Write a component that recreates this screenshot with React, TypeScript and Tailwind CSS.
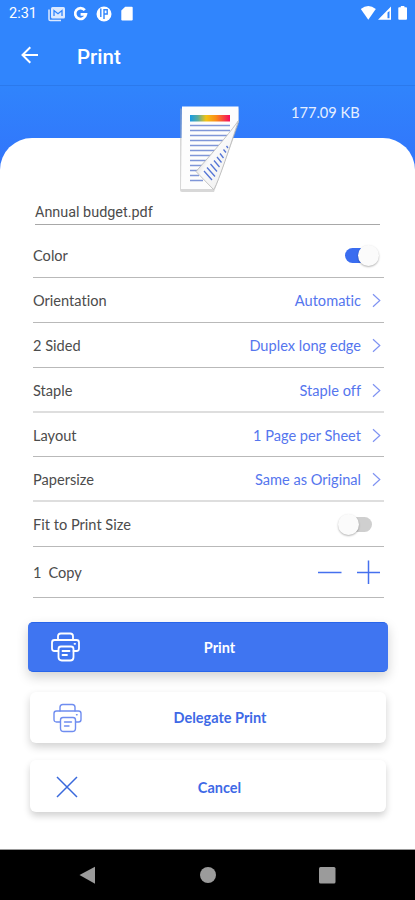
import clsx from "clsx";
import { useState } from "react";

const StatusBar = () => {
    return (
        <div className="flex h-7 items-start justify-between text-white">
            <div className="flex items-center pt-[5px] pl-[9px]">
                <span className="w-[39px] whitespace-nowrap font-[Roboto,sans-serif] text-[14.5px] leading-[18px]">2:31</span>
                <svg width="18" height="16" viewBox="0 0 18 16" fill="none">
                    <path d="M1 3.5v9.7q0 1.3 1.3 1.3H13" stroke="#dbe9ff" strokeWidth="1.5" />
                    <rect x="3" y="1" width="14" height="11.5" rx="1.5" fill="#dbe9ff" />
                    <path d="M6 10V4.5l4 3.2 4-3.2V10" stroke="#3085fd" strokeWidth="1.3" />
                </svg>
                <svg className="ml-[7px]" width="15" height="16" viewBox="0 0 15 16" fill="none" stroke="#fff" strokeWidth="2.7">
                    <path d="M11.8 4.2A5.4 5.4 0 1 0 12.9 8.4H7.6" />
                </svg>
                <svg className="ml-2" width="16" height="16" viewBox="0 0 16 16">
                    <circle cx="8" cy="8" r="7.5" fill="#fff" />
                    <path d="M4.8 2.5V11M8 3v10M8 3.8h3.2V8H8" stroke="#3085fd" strokeWidth="1.4" fill="none" />
                </svg>
                <svg className="ml-[9px]" width="12" height="16" viewBox="0 0 12 16" fill="#fff">
                    <path d="M4.2.8h6.5q1 0 1 1v11.4q0 1.3-1 1.3H1.3q-1 0-1-1.3V4.6z" />
                </svg>
            </div>
            <div className="flex pt-[5px] pr-[7px]">
                <svg width="48" height="16" viewBox="0 0 48 16" fill="#fff">
                    <path d="M.8 4Q8.3-2.2 15.8 4L8.3 14.7z" />
                    <path d="M18 14.8 31 1.5v13.3zM27.5 7.5v5.8h2V6z" fillRule="evenodd" />
                    <path d="M38.3 3q0-.8.8-.8h1.7V1h3.6v1.2h1.7q.9 0 .9.8v10.8q0 1-.9 1h-7q-.8 0-.8-1z" />
                </svg>
            </div>
        </div>
    );
};

const DocumentIcon = () => {
    return (
        <svg width="64" height="90" viewBox="0 0 64 90" className="block">
            <defs>
                <linearGradient id="rainbow">
                    <stop offset="0" stopColor="#159be6" />
                    <stop offset=".2" stopColor="#5aac9c" />
                    <stop offset=".4" stopColor="#f2c312" />
                    <stop offset=".65" stopColor="#fb8c18" />
                    <stop offset="1" stopColor="#f4095e" />
                </linearGradient>
                <linearGradient id="fold" x1="0" y1="0" x2="1" y2="1">
                    <stop offset=".3" stopColor="#d8d8d8" />
                    <stop offset=".45" stopColor="#fafafa" />
                    <stop offset=".8" stopColor="#f0f0f0" />
                </linearGradient>
            </defs>
            <path d="M2 3.5H61v15L36 87H4Q2 87 2 85z" fill="#a8a8a8" opacity=".45" />
            <path d="M4 1.5H60.500V17L35 84H3z" fill="#fdfdfd" />
            <rect x="12" y="10" width="40" height="6.5" fill="url(#rainbow)" />
            <path
                d="M12 20.5h40M12 25.500h40M12 30.500h38M12 35.500h34M12 40.500h30M12 45.500h26M12 50.500h22M12 55.500h18M12 60.500h14M12 65.500h8M12 70.500h9M12 75.500h13"
                stroke="#7f96d8"
                strokeWidth="1.3"
            />
            <path d="M60.500 15.500Q52 28 18 66.500L35.500 84.500Q39 82 60.500 15.500Z" fill="url(#fold)" stroke="#b5b5b5" strokeWidth=".8" />
            <path
                d="m26 66 8 9M29 62.500l8 9M32.500 59l6.500 7.500M36 55.500l5.500 6.500M39 52l4.500 5.500M42 48.500l3.500 4.500M45.500 44.500l2.500 3M48.500 41l1.500 2"
                stroke="#5575d6"
                strokeWidth="1.3"
            />
        </svg>
    );
};

const PrinterIcon = ({ className }: { className?: string }) => {
    return (
        <svg width="30" height="30" viewBox="0 0 30 30" fill="none" stroke="currentColor" strokeLinejoin="round" strokeLinecap="round" className={className}>
            <path d="M7 8V4.3Q7 1.5 9.8 1.5h9.4Q22 1.5 22 4.3V8" />
            <path d="M7.3 19H3.5Q1 19 1 16.5v-6Q1 8 3.5 8h22Q28 8 28 10.5v6q0 2.5-2.5 2.5h-3" />
            <path d="M10 14.5h10q2.5 0 2.5 2.5v8.2q0 3.3-3.3 3.3h-8.4q-3.3 0-3.3-3.3V17q0-2.5 2.5-2.5z" />
            <path d="M11.5 19h7M11.5 23H16M23.5 11.8h.6" />
        </svg>
    );
};

const Chevron = () => {
    return (
        <svg width="9" height="15" viewBox="0 0 9 15" fill="none" stroke="#7f93f2" strokeWidth="1.2">
            <path d="m1 1.2 6.8 6.3L1 13.8" />
        </svg>
    );
};

const Toggle = ({ on, onClick }: { on: boolean; onClick: () => void }) => {
    return (
        <button onClick={onClick} className={clsx("flex h-[21px] w-[34px] items-center", on ? "mr-px justify-end" : "mr-[8px] justify-start")}>
            <span className={clsx("flex h-[15px] w-[27px] items-center rounded-full", on ? "mr-[7px] justify-end bg-[#3a6df0]" : "ml-[7px] justify-start bg-[#cfcfcf]")}>
                <span className={clsx("size-[21px] shrink-0 rounded-full bg-[#fbfbfb] shadow-[0_1px_2px_rgba(0,0,0,0.3)]", on ? "-mr-[7px]" : "-ml-[7px]")}></span>
            </span>
        </button>
    );
};

const rows = [
    { label: "Orientation", value: "Automatic", className: "h-[45px] border-b border-[#b9b9b9]" },
    { label: "2 Sided", value: "Duplex long edge", className: "h-[45px] border-b border-[#b9b9b9]" },
    { label: "Staple", value: "Staple off", className: "h-[45px] border-b-2 border-[#dedede]" },
    { label: "Layout", value: "1 Page per Sheet", className: "h-[44px] border-b border-[#b9b9b9]" },
    { label: "Papersize", value: "Same as Original", className: "h-[45px] border-b-2 border-[#dedede]" },
];

const App = () => {
    const [color, setColor] = useState(true);
    const [fit, setFit] = useState(false);

    return (
        <div className="flex h-[900px] w-[415px] flex-col overflow-hidden bg-white font-[Lato,sans-serif] text-[14.6px] text-[#4c4c4c] [font-variant-ligatures:none]">
            <header className="h-[86px] shrink-0 border-b border-[#2b79ec] bg-[#3085fd] text-white">
                <StatusBar />
                <div className="flex h-[57px] items-center pl-[21px]">
                    <svg width="18" height="18" viewBox="0 0 18 18" fill="none" stroke="#fff" strokeWidth="2" className="mb-[3px]">
                        <path d="M9.3 1.2 1.5 9l7.8 7.8M1.5 9H17" />
                    </svg>
                    <h1 className="mt-px ml-[38px] font-[Roboto,sans-serif] text-[20.5px] font-medium">Print</h1>
                </div>
            </header>
            <div className="h-[90px] shrink-0 bg-linear-to-b from-[#3084fc] to-[#3273fb]">
                <div className="relative h-[52px] pt-4 pl-[291px] text-[14.6px] leading-[21px] text-[#e6efff]">
                    177.09 KB
                    <div className="absolute top-[19px] left-[178px]">
                        <DocumentIcon />
                    </div>
                </div>
                <div className="h-[38px] rounded-t-[32px] bg-white"></div>
            </div>
            <main className="grow">
                <div className="mr-[35px] ml-[35px] flex h-[49px] items-end border-b border-[#a8a8a8] pb-px font-[Roboto,sans-serif] text-[14.4px] leading-[20px]">
                    Annual budget.pdf
                </div>
                <div className="mr-[31px] ml-[33px]">
                    <div className="flex h-[53px] items-center justify-between border-b border-[#b9b9b9] pt-[9px] pr-[4px]">
                        Color
                        <Toggle on={color} onClick={() => setColor(!color)} />
                    </div>
                    {rows.map((row) => (
                        <div key={row.label} className={clsx("flex items-center justify-between pt-[2px] pr-[3px]", row.className)}>
                            <span>{row.label}</span>
                            <span className="flex items-center gap-[11px] text-[#5576ee]">
                                {row.value}
                                <Chevron />
                            </span>
                        </div>
                    ))}
                    <div className="flex h-[45px] items-center justify-between border-b border-[#b9b9b9] pt-px pr-[4px]">
                        Fit to Print Size
                        <Toggle on={fit} onClick={() => setFit(!fit)} />
                    </div>
                    <div className="flex h-[51px] items-center justify-between border-b border-[#b9b9b9] pr-[4px]">
                        <span className="pt-[2px]">
                            1<span className="ml-[7px]">Copy</span>
                        </span>
                        <svg width="62" height="24" viewBox="0 0 62 24" fill="none" stroke="#4570ee" strokeWidth="1.5">
                            <path d="M0 12.5h23.5M39 12.5h23M50.5.5V24" />
                        </svg>
                    </div>
                </div>
                <div className="flex flex-col pt-6 text-[14.5px] text-[#3e69e6]">
                    <button className="mr-[27px] ml-[28px] flex h-[50px] items-center rounded-[5px] border-y border-[#2865ea] bg-[#3f75f1] font-bold text-white shadow-[0_5px_12px_rgba(0,0,0,0.18)]">
                        <PrinterIcon className="ml-[23px] stroke-[1.8]" />
                        <span className="w-[277px] pt-[2px] text-center">Print</span>
                    </button>
                    <button className="mt-[20px] mr-[29px] ml-[30px] flex h-[51px] items-center rounded-[6px] bg-white font-bold shadow-[0_4px_8px_rgba(0,0,0,0.18)]">
                        <PrinterIcon className="ml-[23px] stroke-[1.4] text-[#6f8df0]" />
                        <span className="w-[274px] pt-px text-center">Delegate Print</span>
                    </button>
                    <button className="mt-[17px] mr-[29px] ml-[30px] flex h-[52px] items-center rounded-[6px] bg-white pt-px font-bold shadow-[0_4px_7px_rgba(0,0,0,0.18)]">
                        <svg width="22" height="22" viewBox="0 0 22 22" stroke="#3969dc" strokeWidth="1.5" className="ml-[26px]">
                            <path d="m1 1 20 20M21 1 1 21" />
                        </svg>
                        <span className="ml-1 w-[275px] pt-[2px] text-center">Cancel</span>
                    </button>
                </div>
            </main>
            <nav className="flex h-[51px] shrink-0 border-t border-[#999] bg-black">
                <svg width="415" height="50" viewBox="0 0 415 50" fill="#9b9b9b">
                    <path d="M79.5 25 95 16.7v17.1z" />
                    <circle cx="208" cy="25" r="8" />
                    <rect x="319" y="17" width="16.5" height="16.5" rx="1.5" />
                </svg>
            </nav>
        </div>
    );
};

export default App;
